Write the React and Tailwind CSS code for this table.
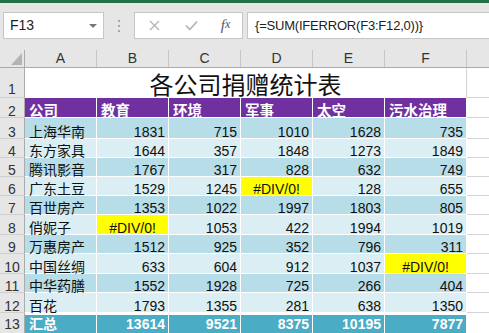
import React from "react";

const COLS = [
  { key: "A", w: "w-[72px]" },
  { key: "B", w: "w-[72px]" },
  { key: "C", w: "w-[72px]" },
  { key: "D", w: "w-[72px]" },
  { key: "E", w: "w-[72px]" },
  { key: "F", w: "w-[82px]" },
];

const HEAD = ["公司", "教育", "环境", "军事", "太空", "污水治理"];

const ROWS = [
  { n: 3, h: "h-[21px]", cells: ["上海华南", 1831, 715, 1010, 1628, 735] },
  { n: 4, h: "h-[19px]", cells: ["东方家具", 1644, 357, 1848, 1273, 1849] },
  { n: 5, h: "h-[19px]", cells: ["腾讯影音", 1767, 317, 828, 632, 749] },
  { n: 6, h: "h-[19px]", cells: ["广东土豆", 1529, 1245, "#DIV/0!", 128, 655] },
  { n: 7, h: "h-[19px]", cells: ["百世房产", 1353, 1022, 1997, 1803, 805] },
  { n: 8, h: "h-[20px]", cells: ["俏妮子", "#DIV/0!", 1053, 422, 1994, 1019] },
  { n: 9, h: "h-[19px]", cells: ["万惠房产", 1512, 925, 352, 796, 311] },
  { n: 10, h: "h-[20px]", cells: ["中国丝绸", 633, 604, 912, 1037, "#DIV/0!"] },
  { n: 11, h: "h-[19px]", cells: ["中华药膳", 1552, 1928, 725, 266, 404] },
  { n: 12, h: "h-[20px]", cells: ["百花", 1793, 1355, 281, 638, 1350] },
];

const TOTAL = ["汇总", 13614, 9521, 8375, 10195, 7877];

function RowHead({ n, className = "" }) {
  return (
    <div
      className={`w-[25px] shrink-0 flex items-end justify-center bg-[#e6e6e6] border-r border-r-[#ababab] border-b border-b-[#cfcfcf] text-[14px] leading-[10px] text-[#333] ${className}`}
    >
      {n}
    </div>
  );
}

function DataRow({ row, odd }) {
  const bg = odd ? "bg-[#b7dde8]" : "bg-[#daeef3]";
  return (
    <div className={`flex ${row.h}`}>
      <RowHead n={row.n} className="pb-[1px]" />
      {row.cells.map((c, i) => {
        const err = c === "#DIV/0!";
        const text = i === 0;
        return (
          <div
            key={i}
            className={`${COLS[i].w} shrink-0 flex items-end pb-[1px] px-[3px] border-r border-b border-white leading-[10px] text-[14px] text-[#111] ${
              err ? "bg-[#ffff00] justify-center" : bg
            } ${text ? "justify-start pl-[4px]" : err ? "" : "justify-end"}`}
          >
            {c}
          </div>
        );
      })}
      <div className="flex-1 border-b border-[#d4d4d4]" />
    </div>
  );
}

export default function App() {
  return (
    <div className="w-[489px] h-[333px] overflow-hidden bg-white font-['Liberation_Sans','Noto_Sans_CJK_SC',sans-serif]">
      <div className="h-[3px] bg-[#217346]" />

      {/* formula bar */}
      <div className="h-[47px] bg-[#e6e6e6] flex items-start pt-[9px] pl-[3px]">
        <div className="w-[101px] h-[27px] shrink-0 bg-white border border-[#c6c6c6] flex items-center justify-between pl-[6px] pr-[6px] text-[14px] text-[#222]">
          <span>F13</span>
          <span className="w-0 h-0 border-x-[4px] border-x-transparent border-t-[4px] border-t-[#777]" />
        </div>
        <div className="w-[30px] h-[27px] shrink-0 flex flex-col items-center justify-center gap-[3px]">
          <span className="w-[2px] h-[2px] bg-[#a8a8a8]" />
          <span className="w-[2px] h-[2px] bg-[#a8a8a8]" />
          <span className="w-[2px] h-[2px] bg-[#a8a8a8]" />
        </div>
        <div className="w-[109px] h-[27px] shrink-0 bg-white border border-[#c6c6c6] flex items-center">
          <div className="w-[38px] flex justify-center">
            <svg width="11" height="11" viewBox="0 0 11 11">
              <path d="M1 1L10 10M10 1L1 10" stroke="#b5b5b5" strokeWidth="1.4" fill="none" />
            </svg>
          </div>
          <div className="w-[36px] flex justify-center">
            <svg width="13" height="11" viewBox="0 0 13 11">
              <path d="M1 5.5L4.8 9.5L12 1.5" stroke="#b5b5b5" strokeWidth="1.8" fill="none" />
            </svg>
          </div>
          <div className="w-[33px] flex justify-center font-['Liberation_Serif',serif] italic text-[15px] text-[#555] leading-none">
            f<span className="text-[12px]">x</span>
          </div>
        </div>
        <div className="w-[260px] h-[27px] shrink-0 ml-[4px] bg-white border border-[#c6c6c6] flex items-center pl-[7px] text-[13px] tracking-[-0.2px] text-[#222]">
          {"{=SUM(IFERROR(F3:F12,0))}"}
        </div>
      </div>

      {/* column headers */}
      <div className="flex h-[18px] bg-[#e6e6e6] border-b border-[#ababab]">
        <div className="w-[25px] shrink-0 relative border-r border-[#ababab]">
          <svg className="absolute right-[2px] bottom-[2px]" width="11" height="12" viewBox="0 0 11 12">
            <path d="M11 0L11 12L0 12Z" fill="#b4b4b4" />
          </svg>
        </div>
        {COLS.map((c) => (
          <div
            key={c.key}
            className={`${c.w} shrink-0 flex items-center justify-center border-r border-[#c6c6c6] text-[14px] text-[#333]`}
          >
            {c.key}
          </div>
        ))}
        <div className="flex-1" />
      </div>

      {/* row 1 title */}
      <div className="flex h-[30px]">
        <RowHead n={1} className="pb-[3px]" />
        <div className="w-[442px] shrink-0 flex items-end justify-center border-r border-[#d4d4d4] text-[24px] leading-[24px] text-[#111] font-['Noto_Sans_CJK_SC',sans-serif] pb-[2px]">
          各公司捐赠统计表
        </div>
        <div className="flex-1 border-b border-[#d4d4d4]" />
      </div>

      {/* row 2 header */}
      <div className="flex h-[20px]">
        <RowHead n={2} className="pb-[1px]" />
        {HEAD.map((t, i) => (
          <div
            key={i}
            className={`${COLS[i].w} shrink-0 flex items-end pb-[1px] pl-[4px] bg-[#7030a0] border-r border-b border-white text-white font-bold text-[14.5px] leading-[10px]`}
          >
            {t}
          </div>
        ))}
        <div className="flex-1 border-b border-[#d4d4d4]" />
      </div>

      {ROWS.map((r, i) => (
        <DataRow key={r.n} row={r} odd={i % 2 === 0} />
      ))}

      {/* total row */}
      <div className="flex h-[20px]">
        <RowHead n={13} className="pb-[4px] border-b-0" />
        {TOTAL.map((c, i) => (
          <div
            key={i}
            className={`${COLS[i].w} shrink-0 flex items-end pb-[4px] px-[3px] bg-[#4bacc6] border-t-2 border-r border-white text-white font-bold text-[14px] leading-[10px] ${
              i === 0 ? "justify-start pl-[4px]" : "justify-end"
            }`}
          >
            {c}
          </div>
        ))}
        <div className="flex-1" />
      </div>
    </div>
  );
}
